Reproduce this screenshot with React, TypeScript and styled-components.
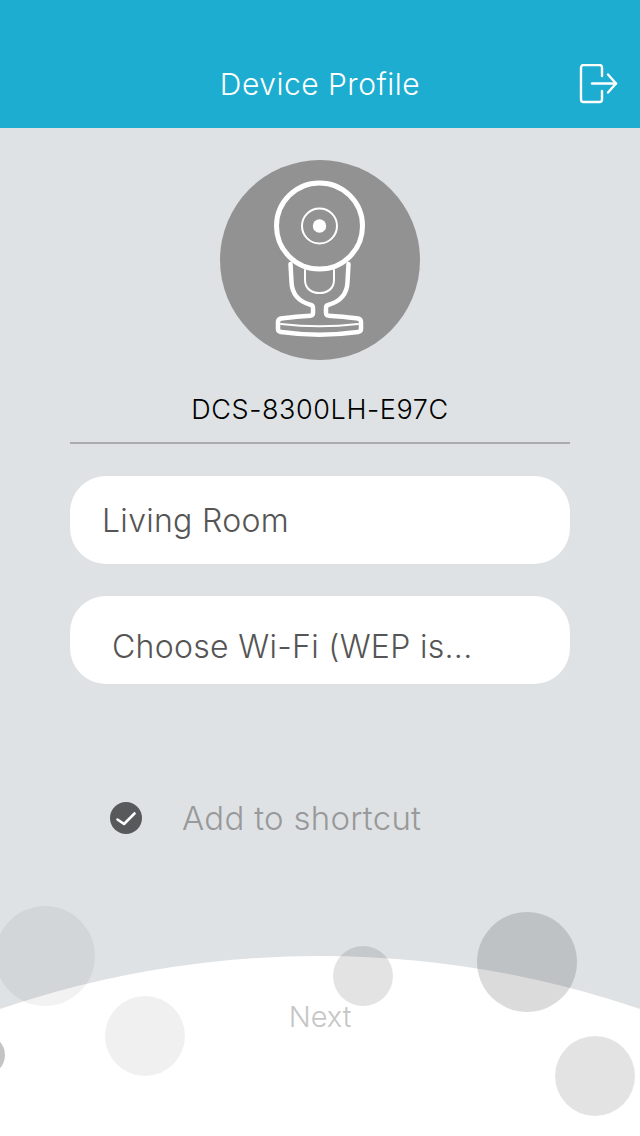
import styled, { createGlobalStyle } from 'styled-components';

const GlobalStyle = createGlobalStyle`
  html, body {
    margin: 0;
    padding: 0;
    background: #dfe2e5;
    font-family: Inter, "Liberation Sans", sans-serif;
  }
`;

const Page = styled.div`
  position: relative;
  width: 640px;
  height: 1136px;
  overflow: hidden;
  display: flex;
  flex-direction: column;
  background: #dfe2e5;
`;

const Header = styled.header`
  height: 128px;
  box-sizing: border-box;
  padding: 64px 21px 0 0;
  background: #1dadd0;
  display: flex;
  justify-content: flex-end;
  align-items: flex-start;
  position: relative;
`;

const HeaderTitle = styled.h1`
  position: absolute;
  left: 0;
  right: 0;
  top: 66px;
  margin: 0;
  text-align: center;
  font-size: 30px;
  line-height: 36px;
  font-weight: 300;
  letter-spacing: 0.5px;
  color: #fff;
`;

const Content = styled.main`
  flex: 1;
  display: flex;
  flex-direction: column;
  align-items: center;
  padding: 32px 70px 0;
`;

const Avatar = styled.div`
  width: 200px;
  height: 200px;
  border-radius: 50%;
  background: #929292;
`;

const DeviceName = styled.div`
  width: 100%;
  margin-top: 32px;
  padding-bottom: 15px;
  border-bottom: 2px solid #a9abac;
  text-align: center;
  font-size: 27px;
  line-height: 35px;
  font-weight: 350;
  letter-spacing: 0.6px;
  color: #000;
`;

const Field = styled.div<{ $inset: number; $drop: number }>`
  width: 100%;
  height: 88px;
  box-sizing: border-box;
  margin-top: 32px;
  padding: ${(p) => p.$drop}px 0 0 ${(p) => p.$inset}px;
  border-radius: 36px;
  background: #fff;
  display: flex;
  align-items: center;
  font-size: 32px;
  font-weight: 300;
  letter-spacing: 0.3px;
  color: #555;
`;

const ShortcutRow = styled.div`
  align-self: flex-start;
  margin: 116px 0 0 40px;
  display: flex;
  align-items: center;
  gap: 40px;
  height: 36px;
`;

const ShortcutLabel = styled.span`
  font-size: 33px;
  font-weight: 300;
  letter-spacing: 0.27px;
  color: #999;
`;

const NextButton = styled.div`
  position: relative;
  margin-bottom: 101px;
  text-align: center;
  font-size: 29px;
  line-height: 36px;
  font-weight: 300;
  color: #c6c6c6;
`;

const Wave = styled.div`
  position: absolute;
  left: -672px;
  top: 956px;
  width: 1984px;
  height: 1984px;
  border-radius: 50%;
  background: #fff;
`;

const Bubble = styled.div<{ $x: number; $y: number; $r: number; $tone: number }>`
  position: absolute;
  left: ${(p) => p.$x - p.$r}px;
  top: ${(p) => p.$y - p.$r}px;
  width: ${(p) => p.$r * 2}px;
  height: ${(p) => p.$r * 2}px;
  border-radius: 50%;
  background: rgba(0, 0, 0, ${(p) => p.$tone});
`;

const bubbles = [
  { x: 45, y: 956, r: 50, tone: 0.05 },
  { x: 145, y: 1036, r: 40, tone: 0.06 },
  { x: -15, y: 1055, r: 20, tone: 0.23 },
  { x: 363, y: 976, r: 30, tone: 0.11 },
  { x: 527, y: 962, r: 50, tone: 0.14 },
  { x: 595, y: 1076, r: 40, tone: 0.11 },
];

function ExitIcon() {
  return (
    <svg width="40" height="42" viewBox="0 0 40 42" fill="none" stroke="#fff" strokeWidth="2.4" strokeLinecap="round" strokeLinejoin="round">
      <path d="M23 12V3.5A2.5 2.5 0 0 0 20.5 1H4.5A2.5 2.5 0 0 0 2 3.5V35.5A2.5 2.5 0 0 0 4.5 38H20.5A2.5 2.5 0 0 0 23 35.5V27" />
      <path d="M13 19.5H37" />
      <path d="M29 10.5L37 19.5L29 28.5" />
    </svg>
  );
}

function CameraIcon() {
  return (
    <svg width="200" height="200" viewBox="0 0 200 200" fill="none" stroke="#fff" strokeLinecap="round" strokeLinejoin="round">
      <circle cx="99.5" cy="66" r="43" strokeWidth="5" />
      <circle cx="99.5" cy="66" r="17.5" strokeWidth="2" />
      <circle cx="99.5" cy="66" r="6.7" fill="#fff" stroke="none" />
      <path d="M70.5 104L71.5 122C72 135 80 142 91 145C92.5 145.5 93 146 93 148V153C93 155 92 155.5 90 155.7C80 156.5 70 157 61 158.5C59 159 58 160 58 162V169C58 171 59 171.7 61 172C86 175.5 113 175.5 138 172C140 171.7 141 171 141 169V162C141 160 140 159 138 158.5C129 157 119 156.5 109 155.7C107 155.5 106 155 106 153V148C106 146 106.5 145.5 108 145C119 142 127 135 127.5 122L128.5 104" strokeWidth="4.5" />
      <path d="M85 110V120C85 129 92 133 99.5 133C107 133 114 129 114 120V110" strokeWidth="2" />
      <path d="M61 164C86 167 113 167 138 164" strokeWidth="2" />
    </svg>
  );
}

function CheckIcon() {
  return (
    <svg width="32" height="32" viewBox="0 0 32 32">
      <circle cx="16" cy="16" r="16" fill="#58595b" />
      <path d="M7.5 17.5L14 22L24.5 11.5" fill="none" stroke="#fff" strokeWidth="2.6" strokeLinecap="round" strokeLinejoin="round" />
    </svg>
  );
}

export default function App() {
  return (
    <>
      <GlobalStyle />
      <Page>
        <Wave />
        {bubbles.map((b) => (
          <Bubble key={`${b.x}-${b.y}`} $x={b.x} $y={b.y} $r={b.r} $tone={b.tone} />
        ))}
        <Header>
          <HeaderTitle>Device Profile</HeaderTitle>
          <ExitIcon />
        </Header>
        <Content>
          <Avatar>
            <CameraIcon />
          </Avatar>
          <DeviceName>DCS-8300LH-E97C</DeviceName>
          <Field $inset={32} $drop={0}>Living Room</Field>
          <Field $inset={42} $drop={12}>Choose Wi-Fi (WEP is...</Field>
          <ShortcutRow>
            <CheckIcon />
            <ShortcutLabel>Add to shortcut</ShortcutLabel>
          </ShortcutRow>
        </Content>
        <NextButton>Next</NextButton>
      </Page>
    </>
  );
}
